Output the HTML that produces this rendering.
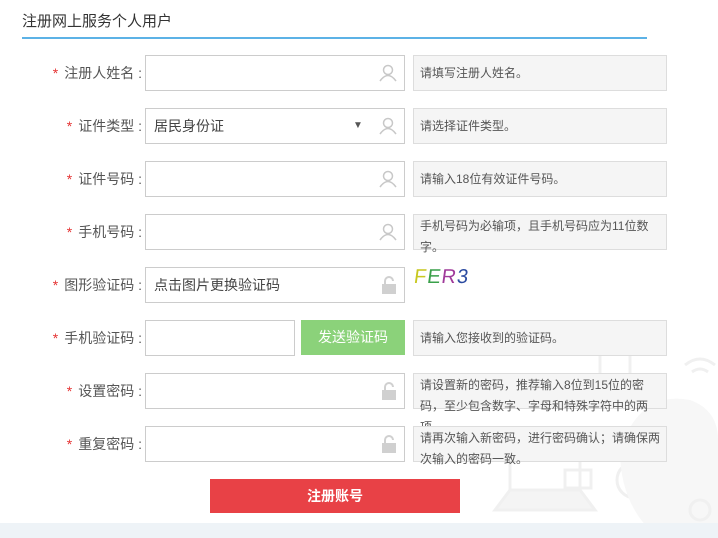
<!DOCTYPE html>
<html><head><meta charset="utf-8"><style>
*{margin:0;padding:0;box-sizing:border-box}
body{width:718px;height:538px;background:#fff;position:relative;overflow:hidden;font-family:"Liberation Sans","Noto Sans CJK SC",sans-serif;color:#555}
.t{position:absolute;left:22px;top:10px;font-size:15px;color:#333}
.line{position:absolute;left:22px;top:37px;width:625px;height:2px;background:#5cb2e6}
.lab{position:absolute;right:576px;font-size:14px;color:#555;height:36px;line-height:36px;white-space:nowrap}
.lab b{color:#e53333;font-weight:normal;margin-right:6px}
.in{position:absolute;left:145px;width:260px;height:36px;border:1px solid #ccc;background:#fff;font-size:14px;line-height:34px;padding-left:8px;color:#444}
.hint{position:absolute;left:413px;width:254px;height:36px;border:1px solid #ddd;background:#f5f5f5;font-size:12px;color:#555;padding-left:6px;line-height:34px}
.hint.m{line-height:21px;padding-top:1px;overflow:visible;height:36px}
.ic{position:absolute;right:7px;top:8px}
.bg{position:absolute;left:0;top:523px;width:718px;height:15px;background:#eef3f7}
</style></head><body>
<svg style="position:absolute;left:470px;top:330px" width="248" height="200" fill="none" stroke="#f0f0f0" stroke-width="3">
<rect x="40" y="110" width="70" height="50"/><path d="M25 180 L40 160 H110 L125 180 Z" fill="#f4f4f4"/>
<circle cx="165" cy="150" r="18"/><circle cx="165" cy="150" r="8"/>
<path d="M150 120 Q170 60 220 70 Q248 80 248 110 L248 200 L180 200 Q150 170 150 120Z" fill="#f7f7f7" stroke="none"/>
<circle cx="230" cy="180" r="10"/><rect x="95" y="140" width="26" height="18"/>
<path d="M215 35 q15 -12 30 0 M222 42 q8 -6 16 0"/><rect x="130" y="10" width="30" height="40"/>
</svg>
<div class="t">注册网上服务个人用户</div>
<div class="line"></div>

<div class="lab" style="top:55px"><b>*</b>注册人姓名 :</div>
<div class="in" style="top:55px"><svg class="ic" width="18" height="18" fill="none" stroke="#c8c8c8" stroke-width="1.5"><circle cx="9" cy="6" r="4.5"/><path d="M1 17 Q9 6 17 17"/></svg></div>
<div class="hint" style="top:55px">请填写注册人姓名。</div>

<div class="lab" style="top:108px"><b>*</b>证件类型 :</div>
<div class="in" style="top:108px">居民身份证<span style="position:absolute;left:207px;font-size:10px;color:#555">▼</span><svg class="ic" width="18" height="18" fill="none" stroke="#c8c8c8" stroke-width="1.5"><circle cx="9" cy="6" r="4.5"/><path d="M1 17 Q9 6 17 17"/></svg></div>
<div class="hint" style="top:108px">请选择证件类型。</div>

<div class="lab" style="top:161px"><b>*</b>证件号码 :</div>
<div class="in" style="top:161px"><svg class="ic" width="18" height="18" fill="none" stroke="#c8c8c8" stroke-width="1.5"><circle cx="9" cy="6" r="4.5"/><path d="M1 17 Q9 6 17 17"/></svg></div>
<div class="hint" style="top:161px">请输入18位有效证件号码。</div>

<div class="lab" style="top:214px"><b>*</b>手机号码 :</div>
<div class="in" style="top:214px"><svg class="ic" width="18" height="18" fill="none" stroke="#c8c8c8" stroke-width="1.5"><circle cx="9" cy="6" r="4.5"/><path d="M1 17 Q9 6 17 17"/></svg></div>
<div class="hint m" style="top:214px">手机号码为必输项，且手机号码应为11位数字。</div>

<div class="lab" style="top:267px"><b>*</b>图形验证码 :</div>
<div class="in" style="top:267px">点击图片更换验证码<svg class="ic" style="top:7px" width="16" height="20"><path d="M4 9 V6 a4 4 0 0 1 8 0" fill="none" stroke="#d0d0d0" stroke-width="2"/><rect x="1" y="9" width="14" height="10" fill="#d0d0d0"/></svg></div>
<div style="position:absolute;left:414px;top:266px;font-size:20px;letter-spacing:1px;font-family:'Liberation Sans',sans-serif;transform:skewX(-8deg)"><span style="color:#c8c820">F</span><span style="color:#3aa04a">E</span><span style="color:#a03a9a">R</span><span style="color:#2a4aa0">3</span></div>

<div class="lab" style="top:320px"><b>*</b>手机验证码 :</div>
<div class="in" style="top:320px;width:150px"></div>
<div style="position:absolute;left:301px;top:320px;width:104px;height:35px;background:#8bd27a;color:#fff;font-size:14px;line-height:35px;text-align:center">发送验证码</div>
<div class="hint" style="top:320px">请输入您接收到的验证码。</div>

<div class="lab" style="top:373px"><b>*</b>设置密码 :</div>
<div class="in" style="top:373px"><svg class="ic" style="top:7px" width="16" height="20"><path d="M4 9 V6 a4 4 0 0 1 8 0" fill="none" stroke="#d0d0d0" stroke-width="2"/><rect x="1" y="9" width="14" height="10" fill="#d0d0d0"/></svg></div>
<div class="hint m" style="top:373px">请设置新的密码，推荐输入8位到15位的密码，至少包含数字、字母和特殊字符中的两项。</div>

<div class="lab" style="top:426px"><b>*</b>重复密码 :</div>
<div class="in" style="top:426px"><svg class="ic" style="top:7px" width="16" height="20"><path d="M4 9 V6 a4 4 0 0 1 8 0" fill="none" stroke="#d0d0d0" stroke-width="2"/><rect x="1" y="9" width="14" height="10" fill="#d0d0d0"/></svg></div>
<div class="hint m" style="top:426px">请再次输入新密码，进行密码确认；请确保两次输入的密码一致。</div>

<div style="position:absolute;left:210px;top:479px;width:250px;height:34px;background:#e84146;color:#fff;font-size:14px;font-weight:bold;line-height:34px;text-align:center">注册账号</div>
<div class="bg"></div>
</body></html>
